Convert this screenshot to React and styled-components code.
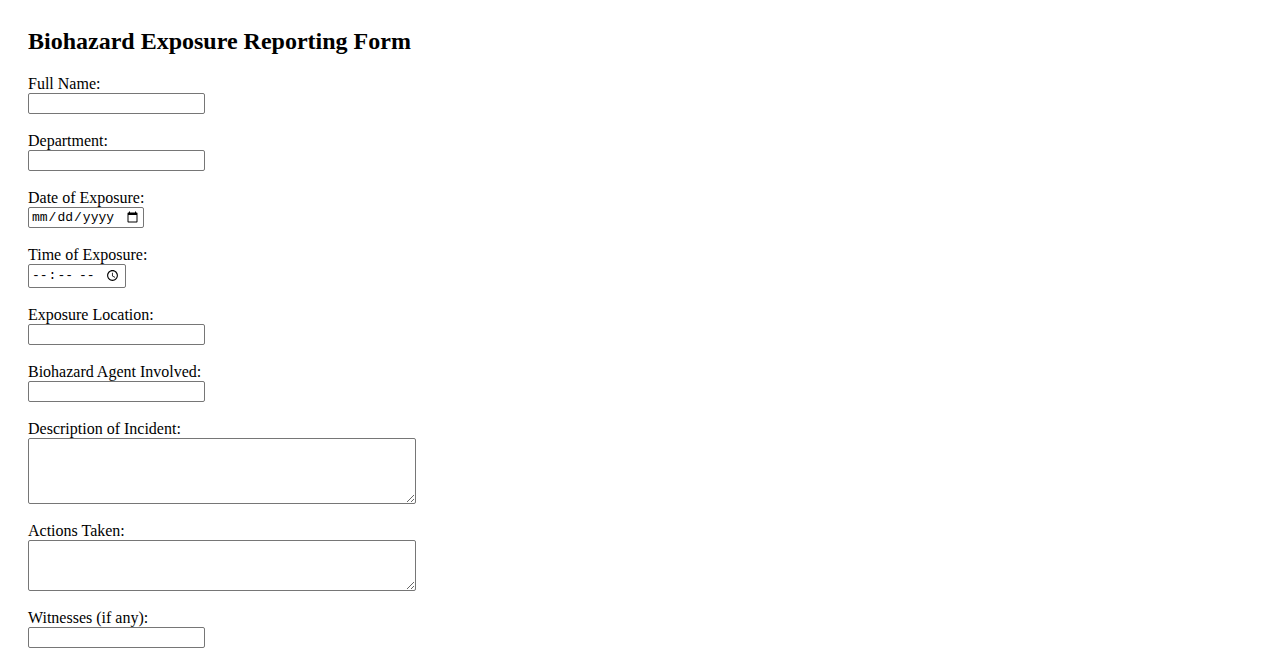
import React from 'react';
import styled, { createGlobalStyle } from 'styled-components';

const GlobalStyle = createGlobalStyle`
  body {
    margin: 8px;
    background: #fff;
    color: #000;
    font-family: "Liberation Serif", "Times New Roman", serif;
    font-size: 16px;
  }
`;

const Page = styled.div`
  padding: 20px 20px 20px;
`;

const Title = styled.h2`
  margin: 0 0 19px;
  font-size: 24px;
  font-weight: bold;
  line-height: 27.6px;
`;

const Form = styled.form`
  display: flex;
  flex-direction: column;
  align-items: flex-start;
`;

const Field = styled.div`
  display: flex;
  flex-direction: column;
  align-items: flex-start;
  margin-bottom: 18px;
`;

const Label = styled.label`
  display: block;
  line-height: 18px;
`;

const inputBase = `
  box-sizing: border-box;
  margin: 0;
  border: 1px solid #767676;
  border-radius: 2px;
  background: #fff;
  color: #000;
  padding: 1px 2px;
  outline: none;
`;

const TextInput = styled.input`
  ${inputBase}
  width: 177px;
  height: 21px;
  font: 13.33px "Liberation Sans", Arial, sans-serif;
`;

const DateInput = styled.input`
  ${inputBase}
  width: ${(p) => p.$w}px;
  height: ${(p) => p.$h}px;
  font: 13px "Liberation Mono", "DejaVu Sans Mono", monospace;
  padding: 1px 2px;
`;

const TextArea = styled.textarea`
  ${inputBase}
  width: 388px;
  height: ${(p) => p.$h}px;
  font: 13px "Liberation Mono", "DejaVu Sans Mono", monospace;
  padding: 2px;
  resize: both;
`;

const fields = [
  { id: 'name', label: 'Full Name:', kind: 'text' },
  { id: 'dept', label: 'Department:', kind: 'text' },
  { id: 'date', label: 'Date of Exposure:', kind: 'date' },
  { id: 'time', label: 'Time of Exposure:', kind: 'time' },
  { id: 'location', label: 'Exposure Location:', kind: 'text' },
  { id: 'agent', label: 'Biohazard Agent Involved:', kind: 'text' },
  { id: 'desc', label: 'Description of Incident:', kind: 'area', h: 66 },
  { id: 'actions', label: 'Actions Taken:', kind: 'area', h: 51 },
  { id: 'witnesses', label: 'Witnesses (if any):', kind: 'text' },
];

function Control({ f }) {
  if (f.kind === 'date') return <DateInput id={f.id} type="date" $w={116} $h={21} />;
  if (f.kind === 'time') return <DateInput id={f.id} type="time" $w={98} $h={24} />;
  if (f.kind === 'area') return <TextArea id={f.id} $h={f.h} />;
  return <TextInput id={f.id} type="text" />;
}

export default function App() {
  return (
    <Page>
      <GlobalStyle />
      <Title>Biohazard Exposure Reporting Form</Title>
      <Form onSubmit={(e) => e.preventDefault()}>
        {fields.map((f) => (
          <Field key={f.id}>
            <Label htmlFor={f.id}>{f.label}</Label>
            <Control f={f} />
          </Field>
        ))}
      </Form>
    </Page>
  );
}
